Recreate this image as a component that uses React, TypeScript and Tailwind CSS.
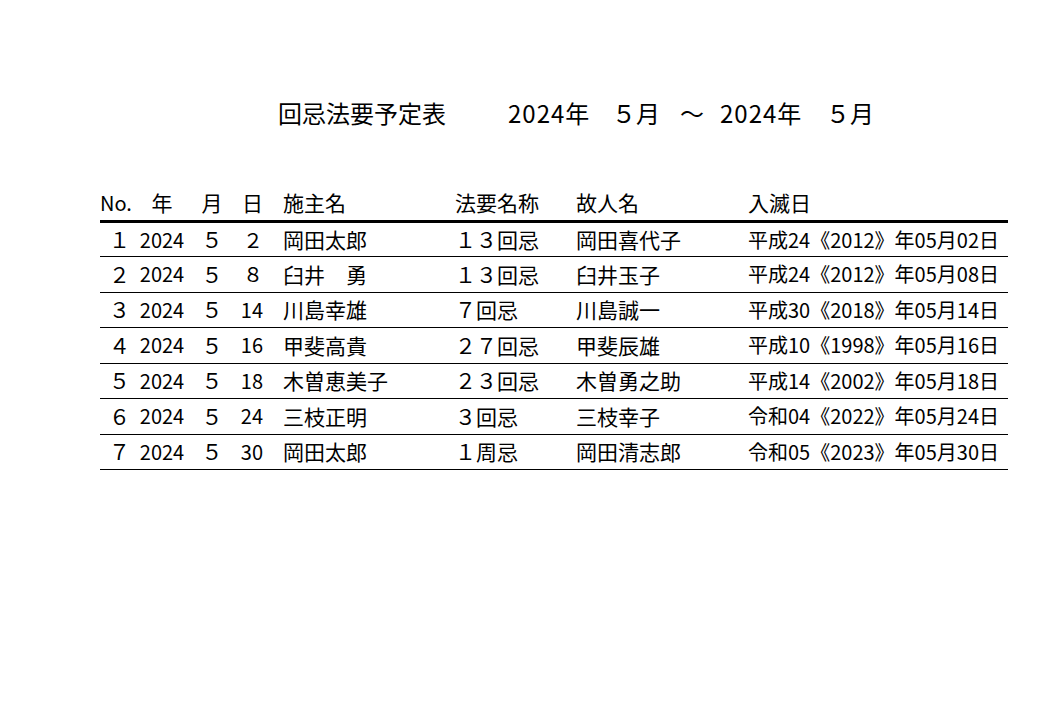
import React from 'react';

const rows = [
  { no: '１', year: '2024', month: '５', day: '２', host: '岡田太郎', hoyo: '１３回忌', name: '岡田喜代子', date: '平成24《2012》年05月02日' },
  { no: '２', year: '2024', month: '５', day: '８', host: '臼井　勇', hoyo: '１３回忌', name: '臼井玉子', date: '平成24《2012》年05月08日' },
  { no: '３', year: '2024', month: '５', day: '14', host: '川島幸雄', hoyo: '７回忌', name: '川島誠一', date: '平成30《2018》年05月14日' },
  { no: '４', year: '2024', month: '５', day: '16', host: '甲斐高貴', hoyo: '２７回忌', name: '甲斐辰雄', date: '平成10《1998》年05月16日' },
  { no: '５', year: '2024', month: '５', day: '18', host: '木曽恵美子', hoyo: '２３回忌', name: '木曽勇之助', date: '平成14《2002》年05月18日' },
  { no: '６', year: '2024', month: '５', day: '24', host: '三枝正明', hoyo: '３回忌', name: '三枝幸子', date: '令和04《2022》年05月24日' },
  { no: '７', year: '2024', month: '５', day: '30', host: '岡田太郎', hoyo: '１周忌', name: '岡田清志郎', date: '令和05《2023》年05月30日' },
];

const grid = 'grid grid-cols-[30px_64px_36px_53px_172px_121px_172px_1fr] items-center';

export default function App() {
  return (
    <div
      className="w-[1053px] h-[704px] bg-white text-black overflow-hidden"
      style={{ fontFamily: '"Noto Sans CJK JP", sans-serif' }}
    >
      {/* title */}
      <div className="pt-[97px] pl-[278px] flex h-[129px] text-[24px] leading-[32px] items-start">
        <span className="w-[230px] shrink-0">回忌法要予定表</span>
        <span className="w-[104px] shrink-0 tracking-[1px]">2024年</span>
        <span className="w-[68px] shrink-0">５月</span>
        <span className="w-[40px] shrink-0">～</span>
        <span className="w-[106px] shrink-0 tracking-[1px]">2024年</span>
        <span className="shrink-0">５月</span>
      </div>

      <div className="mt-[56px] ml-[100px] w-[908px] text-[21px] leading-none">
        {/* header */}
        <div className={`${grid} h-[38px] border-b-[3px] border-black`}>
          <div className="text-left text-[20px]">No.</div>
          <div className="text-center">年</div>
          <div className="text-center">月</div>
          <div className="text-right pr-[20px]">日</div>
          <div>施主名</div>
          <div>法要名称</div>
          <div>故人名</div>
          <div>入滅日</div>
        </div>

        {rows.map((r, i) => (
          <div key={i} className={`${grid} ${i === 0 ? 'h-[34px]' : 'h-[35.5px]'} border-b border-black`}>
            <div className="text-right">{r.no}</div>
            <div className="text-center text-[20px]">{r.year}</div>
            <div className="text-center">{r.month}</div>
            <div className="text-right pr-[20px] text-[20px]">{r.day}</div>
            <div className="whitespace-pre">{r.host}</div>
            <div>{r.hoyo}</div>
            <div>{r.name}</div>
            <div className="whitespace-nowrap text-[20px]">{r.date}</div>
          </div>
        ))}
      </div>
    </div>
  );
}
